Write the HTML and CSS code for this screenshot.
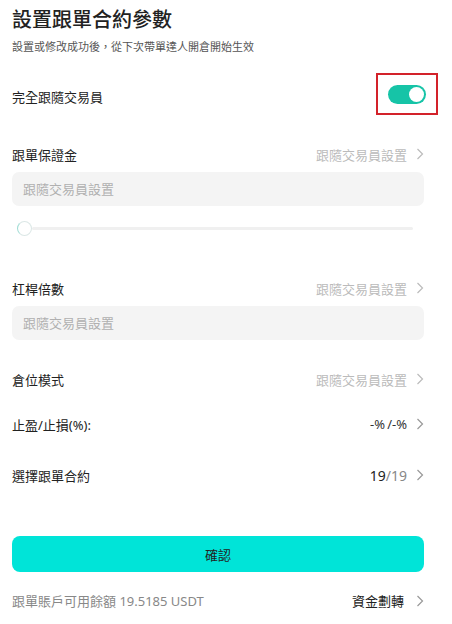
FILE: index.html
```html
<!DOCTYPE html>
<html lang="zh-Hant">
<head>
    <meta charset="UTF-8">
    <meta name="viewport" content="width=device-width, initial-scale=1.0">
    <title>設置跟單合約參數</title>
    <link rel="stylesheet" href="styles.css">
</head>
<body>
    <div class="page">
        <h1 class="title">設置跟單合約參數</h1>
        <p class="hint">設置或修改成功後，從下次帶單達人開倉開始生效</p>

        <div class="row row-switch">
            <span class="label">完全跟隨交易員</span>
            <span class="mark">
                <span class="switch on"><span class="dot"></span></span>
            </span>
        </div>

        <div class="row row-margin">
            <span class="label">跟單保證金</span>
            <span class="value muted">跟隨交易員設置
                <svg class="chev" viewBox="0 0 8 12"><polyline points="1.5,1 6.5,6 1.5,11"/></svg>
            </span>
        </div>
        <div class="input">跟隨交易員設置</div>
        <div class="slider">
            <span class="knob"></span>
            <span class="track"></span>
        </div>

        <div class="row row-lever">
            <span class="label">杠桿倍數</span>
            <span class="value muted">跟隨交易員設置
                <svg class="chev" viewBox="0 0 8 12"><polyline points="1.5,1 6.5,6 1.5,11"/></svg>
            </span>
        </div>
        <div class="input">跟隨交易員設置</div>

        <div class="row row-mode">
            <span class="label">倉位模式</span>
            <span class="value muted">跟隨交易員設置
                <svg class="chev" viewBox="0 0 8 12"><polyline points="1.5,1 6.5,6 1.5,11"/></svg>
            </span>
        </div>

        <div class="row row-tp">
            <span class="label">止盈/止損(%):</span>
            <span class="value">-%&thinsp;/-%
                <svg class="chev" viewBox="0 0 8 12"><polyline points="1.5,1 6.5,6 1.5,11"/></svg>
            </span>
        </div>

        <div class="row row-pick">
            <span class="label">選擇跟單合約</span>
            <span class="value"><span class="num">19<span class="of">/19</span></span>
                <svg class="chev" viewBox="0 0 8 12"><polyline points="1.5,1 6.5,6 1.5,11"/></svg>
            </span>
        </div>

        <button class="confirm">確認</button>

        <div class="footer">
            <span class="balance">跟單賬戶可用餘額 19.5185 USDT</span>
            <span class="transfer">資金劃轉
                <svg class="chev" viewBox="0 0 8 12"><polyline points="1.5,1 6.5,6 1.5,11"/></svg>
            </span>
        </div>
    </div>
</body>
</html>
```

FILE: styles.css
```css
body {
    margin: 0;
    background: #fff;
    color: #222;
    font-family: "Noto Sans", "Noto Sans CJK TC", sans-serif;
}
.page {
    width: 412px;
    padding: 6px 28px 0 12px;
}
.title {
    margin: 0;
    font-size: 20px;
    line-height: 28px;
    font-weight: 500;
    color: #222;
}
.hint {
    margin: 5px 0 0;
    font-size: 11px;
    line-height: 16px;
    color: #555;
}
.row {
    display: flex;
    justify-content: space-between;
    align-items: center;
    height: 24px;
    font-size: 13px;
}
.label {
    color: #222;
}
.value {
    display: flex;
    align-items: center;
    gap: 9px;
    color: #333;
}
.value.muted {
    color: #bbb;
}
.chev {
    width: 8px;
    height: 12px;
    fill: none;
    stroke: #999;
    stroke-width: 1.2;
}
.muted .chev {
    stroke: #bbb;
}
.row-switch {
    height: 44px;
    margin-top: 19px;
}
.mark {
    display: flex;
    align-items: center;
    justify-content: center;
    width: 58px;
    height: 38px;
    border: 2px solid #d3222a;
    margin-right: -14px;
    margin-bottom: 4px;
}
.switch {
    position: relative;
    width: 38px;
    height: 19px;
    border-radius: 10px;
    background: #16c4a7;
}
.switch .dot {
    position: absolute;
    top: 2px;
    right: 2px;
    width: 15px;
    height: 15px;
    border-radius: 50%;
    background: #fff;
}
.row-margin {
    margin-top: 24px;
}
.input {
    margin-top: 6px;
    height: 34px;
    line-height: 34px;
    padding: 0 11px;
    border-radius: 7px;
    background: #f4f4f4;
    color: #b0b0b0;
    font-size: 13px;
}
.slider {
    display: flex;
    align-items: center;
    height: 16px;
    margin-top: 14px;
    padding: 0 11px 0 5px;
}
.knob {
    flex: none;
    width: 13px;
    height: 13px;
    border-radius: 50%;
    border: 1px solid #dbe7e6;
    border-left-color: #9fdcd4;
    background: #fff;
}
.track {
    flex: 1;
    height: 3px;
    border-radius: 2px;
    background: #f0f0f0;
}
.row-lever {
    margin-top: 40px;
}
.row-mode {
    margin-top: 27px;
}
.row-tp {
    margin-top: 21px;
}
.row-pick {
    margin-top: 27px;
}
.num {
    font-size: 14px;
    color: #222;
}
.num .of {
    color: #888;
}
.confirm {
    display: block;
    width: 100%;
    height: 36px;
    margin-top: 49px;
    border: none;
    border-radius: 8px;
    background: #00e4d8;
    color: #222;
    font-family: inherit;
    font-size: 13px;
    cursor: pointer;
}
.footer {
    display: flex;
    justify-content: space-between;
    align-items: center;
    margin-top: 19px;
    line-height: 20px;
    font-size: 13px;
}
.balance {
    color: #888;
}
.transfer {
    display: flex;
    align-items: center;
    gap: 12px;
    color: #222;
}
```
